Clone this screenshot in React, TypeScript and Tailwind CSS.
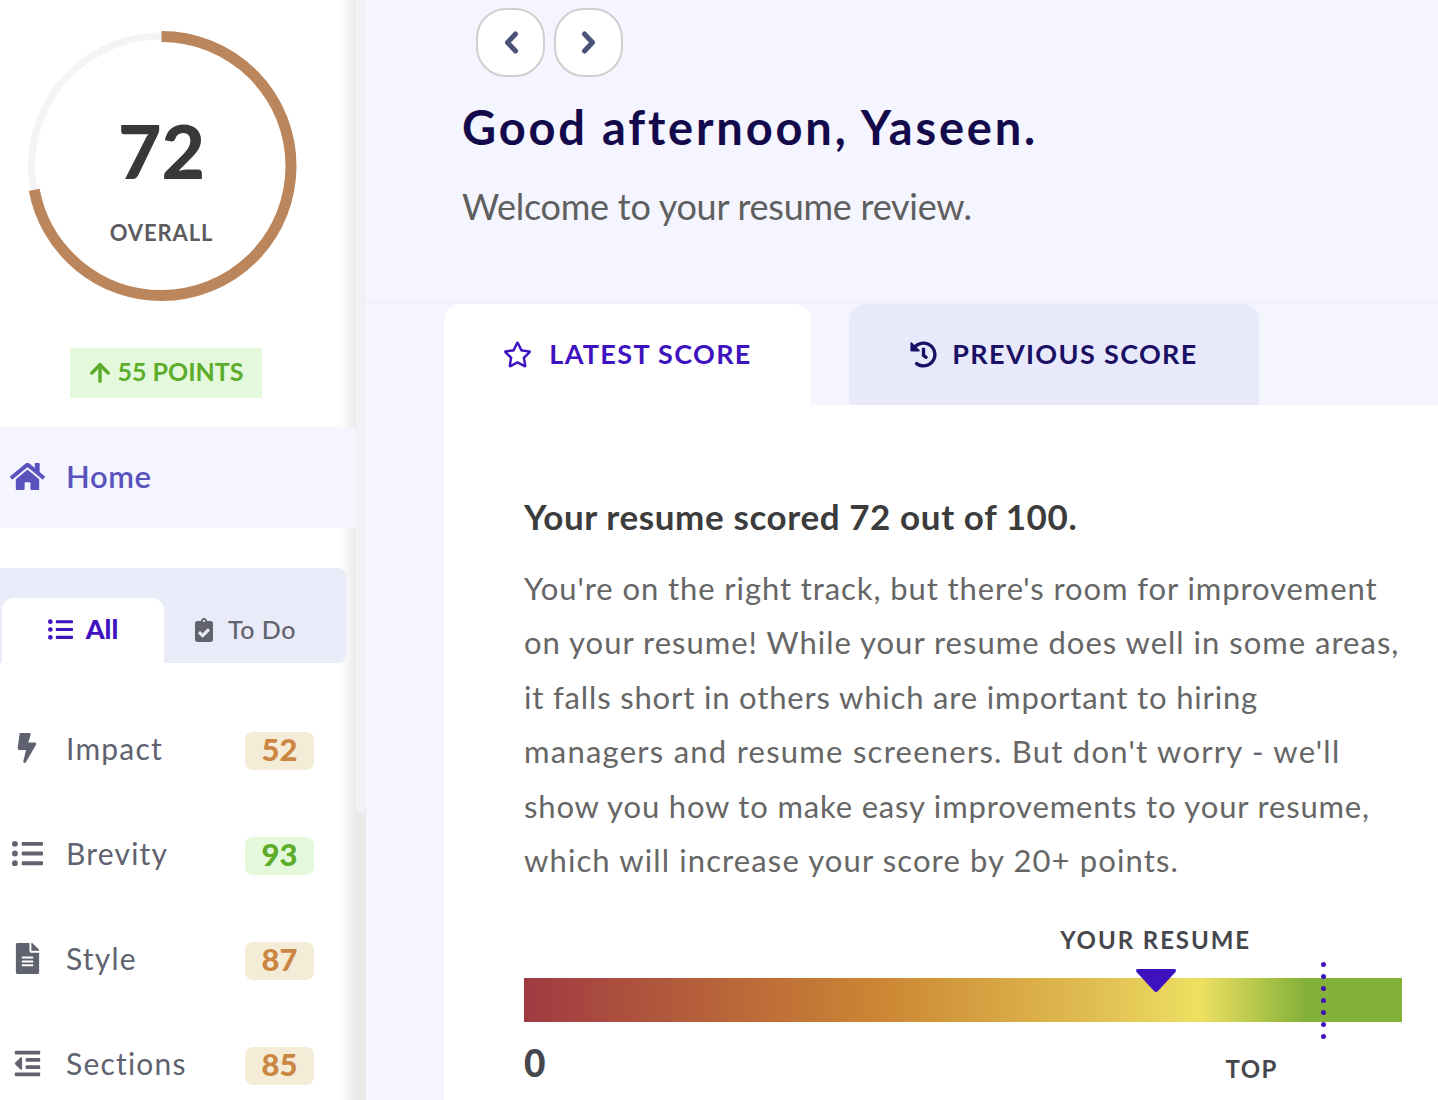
import React from "react";
import { FaHome, FaListUl, FaClipboardCheck, FaBolt, FaFileAlt, FaOutdent, FaRegStar, FaHistory } from "react-icons/fa";
import { ArrowUp } from "lucide-react";

function Ring() {
  return (
    <div className="relative w-[277px] h-[277px] ml-[23px]">
      <svg width="277" height="277" viewBox="0 0 277 277" className="block">
        <circle cx="138.500" cy="138" r="130" fill="none" stroke="#f4f4f6" strokeWidth="7" />
        <circle cx="138.500" cy="138" r="129.500" fill="none" stroke="#bb865c" strokeWidth="11" strokeDasharray="586 814" transform="rotate(-90 138.500 138)" />
      </svg>
      <div className="absolute inset-0 flex flex-col items-center">
        <div className="mt-[78px] text-[75px] leading-[88px] font-black text-[#383838]">72</div>
        <div className="mt-[25px] text-[22px] leading-[28px] font-bold tracking-[0.04em] text-[#5c5c60]">OVERALL</div>
      </div>
    </div>
  );
}

function Chevron({ right }: { right?: boolean }) {
  return (
    <svg width="16" height="23" viewBox="0 0 16 23" className={right ? "rotate-180" : ""}>
      <path d="M12.500 3 L4.500 11.500 L12.500 20" fill="none" stroke="#4a5278" strokeWidth="5" strokeLinecap="round" strokeLinejoin="round" />
    </svg>
  );
}

const items = [
  { name: "Impact", score: 52, Icon: FaBolt, good: false, size: 30 },
  { name: "Brevity", score: 93, Icon: FaListUl, good: true, size: 31 },
  { name: "Style", score: 87, Icon: FaFileAlt, good: false, size: 31 },
  { name: "Sections", score: 85, Icon: FaOutdent, good: false, size: 29 },
];

function Sidebar() {
  return (
    <aside className="w-[366px] h-[1100px] shrink-0 flex overflow-hidden">
      <div className="relative w-[356px] shrink-0 bg-white">
        <div className="absolute top-0 bottom-0 right-0 w-[18px] bg-gradient-to-r from-white to-[#ebebeb]" />
        <div className="relative">
          <div className="pt-[28px]"><Ring /></div>
          <div className="mt-[43px] ml-[70px] w-[192px] h-[50px] bg-[#e4f9dc] flex items-center justify-center gap-[3px] pb-[2px] pr-[2px] text-[#5dac2b] text-[25px] font-bold">
            <ArrowUp size={28} strokeWidth={3} className="mt-[2px]" />
            <span>55 POINTS</span>
          </div>
          <div className="mt-[29px] h-[101px] bg-[#f4f5fe] rounded-tr-md flex items-center pb-[2px] text-[#5a52bd]">
            <FaHome size={35} className="ml-[10px] w-[35px]" />
            <span className="ml-[21px] text-[31px] font-semibold tracking-[0.02em]">Home</span>
          </div>
          <div className="mt-[40px] w-[346px] h-[95px] bg-[#e9ecf8] rounded-r-lg flex items-end">
            <div className="ml-[2px] w-[162px] h-[65px] bg-white rounded-t-xl flex items-center justify-center gap-[13px] pb-[2px] text-[#3f12c0]">
              <FaListUl size={25} />
              <span className="text-[27px] font-black">All</span>
            </div>
            <div className="w-[182px] h-[65px] flex items-center pl-[28px] gap-[12px] pb-[2px] text-[#62636f]">
              <FaClipboardCheck size={24} />
              <span className="text-[25px] font-medium tracking-[0.02em]">To Do</span>
            </div>
          </div>
          <div className="mt-[69px] flex flex-col gap-[67px]">
            {items.map(({ name, score, Icon, good, size }) => (
              <div key={name} className="h-[38px] flex items-center text-[#60626f]">
                <div className="w-[54px] flex justify-center pb-[6px]"><Icon size={size} /></div>
                <span className="ml-[12px] pb-[6px] text-[30px] tracking-[0.04em] w-[179px]">{name}</span>
                <span className={good ? "w-[69px] h-[38px] pb-[3px] rounded-lg bg-[#e4f9dc] text-[#5dac2b] text-[31px] font-black flex items-center justify-center" : "w-[69px] h-[38px] pb-[3px] rounded-lg bg-[#f5ecd8] text-[#cc8644] text-[31px] font-black flex items-center justify-center"}>{score}</span>
              </div>
            ))}
          </div>
        </div>
      </div>
      <div className="w-[10px] h-full bg-[#e9e9e9]">
        <div className="h-[814px] bg-[#f1f1f6] rounded-b-md" />
      </div>
    </aside>
  );
}

function Main() {
  return (
    <main className="flex-1 min-w-0 h-[1100px] overflow-hidden bg-[#f4f5fe]">
      <div className="pt-[8px] ml-[110px] flex gap-[9px]">
        <button className="w-[69px] h-[69px] bg-white border-2 border-[#cfcfcf] rounded-[30px] flex items-center justify-center"><Chevron /></button>
        <button className="w-[69px] h-[69px] bg-white border-2 border-[#cfcfcf] rounded-[30px] flex items-center justify-center"><Chevron right /></button>
      </div>
      <h1 className="ml-[96px] mt-[19px] text-[47px] leading-[62px] font-bold tracking-[0.06em] text-[#130a4b]">Good afternoon, Yaseen.</h1>
      <p className="ml-[96px] mt-[26px] text-[36px] leading-[44px] tracking-[-0.007em] text-[#5f5f5f]">Welcome to your resume review.</p>
      <div className="mt-[74px] border-t-2 border-[#f1f2fa]">
        <div className="ml-[78px] flex gap-[38px]">
          <div className="w-[367px] h-[101px] bg-white rounded-t-2xl flex items-center justify-center gap-[17px] text-[#3f12c0]">
            <FaRegStar size={29} />
            <span className="text-[27px] font-bold tracking-[0.05em]">LATEST SCORE</span>
          </div>
          <div className="w-[410px] h-[101px] bg-[#e8eafc] rounded-t-2xl flex items-center justify-center gap-[15px] text-[#1b1063]">
            <FaHistory size={27} />
            <span className="text-[27px] font-bold tracking-[0.05em]">PREVIOUS SCORE</span>
          </div>
        </div>
      </div>
      <section className="ml-[78px] bg-white pl-[80px] pt-[88px] h-[700px]">
        <h2 className="text-[35px] leading-[46px] font-bold tracking-[0.017em] text-[#3c3c3c]">Your resume scored 72 out of 100.</h2>
        <p className="mt-[22px] text-[31px] leading-[54.4px] text-[#666666] whitespace-nowrap">
          <span className="block tracking-[0.91px]">You're on the right track, but there's room for improvement</span>
          <span className="block tracking-[1px]">on your resume! While your resume does well in some areas,</span>
          <span className="block tracking-[0.84px]">it falls short in others which are important to hiring</span>
          <span className="block tracking-[1.25px]">managers and resume screeners. But don't worry - we'll</span>
          <span className="block tracking-[0.83px]">show you how to make easy improvements to your resume,</span>
          <span className="block tracking-[1.12px]">which will increase your score by 20+ points.</span>
        </p>
        <div className="relative w-[878px] mt-[38px]">
          <div className="text-right pr-[151px] text-[24px] leading-[30px] font-bold tracking-[0.08em] text-[#46474c]">YOUR RESUME</div>
          <div className="relative mt-[23px] h-[44px] bg-[linear-gradient(90deg,#a03a42_0%,#cc8733_41%,#e0be52_65%,#eee062_77%,#84b138_89%,#84b138_100%)]">
            <svg width="42" height="24" viewBox="0 0 42 24" className="absolute left-[611px] top-[-9px]">
              <path d="M3 0 H39 Q42 0 40.500 3 L23 22 Q21 24 19 22 L1.500 3 Q0 0 3 0 Z" fill="#3f12c0" />
            </svg>
            <div className="absolute left-[797px] top-[-16px] flex flex-col gap-[7px]">
              {[0, 1, 2, 3, 4, 5, 6].map((i) => (
                <span key={i} className="block w-[5px] h-[5px] rounded-full bg-[#3f12c0]" />
              ))}
            </div>
          </div>
          <div className="mt-[18px] flex items-start">
            <span className="text-[37px] leading-[46px] font-black text-[#46474c]">0</span>
            <span className="ml-[680px] mt-[14px] text-[24px] leading-[30px] font-bold tracking-[0.06em] text-[#46474c]">TOP</span>
          </div>
        </div>
      </section>
    </main>
  );
}

export default function App() {
  return (
    <div className="flex w-[1438px] h-[1100px] overflow-hidden font-['Lato',sans-serif]">
      <Sidebar />
      <Main />
    </div>
  );
}
